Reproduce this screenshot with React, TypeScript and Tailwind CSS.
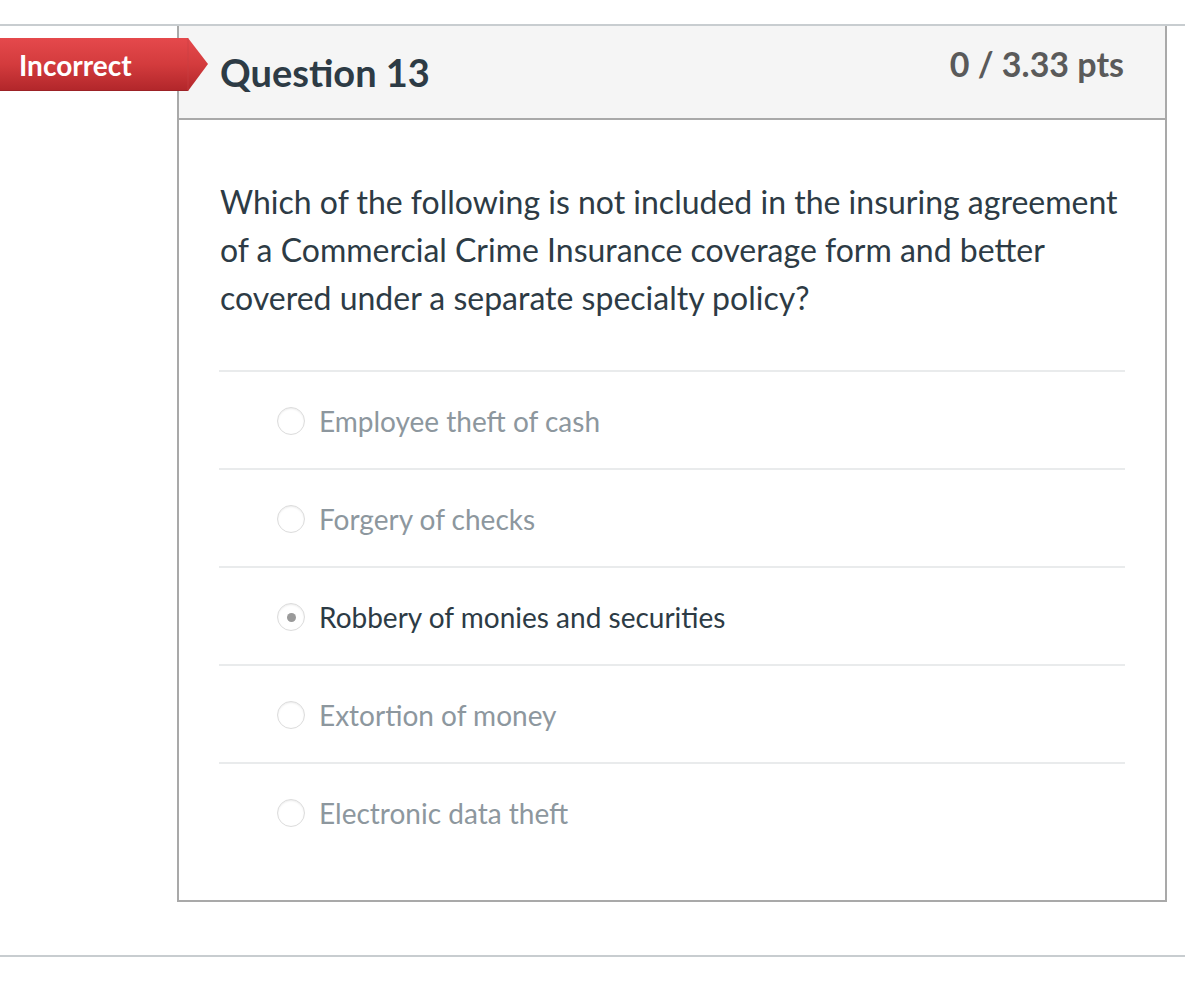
import React from 'react';

const answers = [
  { id: 1, text: 'Employee theft of cash', selected: false },
  { id: 2, text: 'Forgery of checks', selected: false },
  { id: 3, text: 'Robbery of monies and securities', selected: true },
  { id: 4, text: 'Extortion of money', selected: false },
  { id: 5, text: 'Electronic data theft', selected: false },
];

function IncorrectBanner() {
  return (
    <div className="absolute left-0 top-[38px] w-[210px] h-[54px]">
      <svg width="210" height="54" viewBox="0 0 210 54" className="absolute inset-0">
        <defs>
          <linearGradient id="bannerRed" x1="0" y1="0" x2="0" y2="1">
            <stop offset="0" stopColor="#e5494c" />
            <stop offset="0.5" stopColor="#d33b3d" />
            <stop offset="1" stopColor="#b1262a" />
          </linearGradient>
        </defs>
        <path d="M0 0 H188 L208 26 L188 53 H0 Z" fill="url(#bannerRed)" />
        <path d="M0 52.5 H188" stroke="#9c2226" strokeWidth="1" />
        <path d="M188 0 V53" stroke="#c84144" strokeWidth="1" opacity="0.6" />
      </svg>
      <span className="absolute left-[19px] top-[11px] text-[28px] leading-[32px] font-bold text-white">
        Incorrect
      </span>
    </div>
  );
}

function Radio({ selected }: { selected: boolean }) {
  return (
    <span className="flex items-center justify-center w-[28px] h-[28px] rounded-full border border-[#dcdcdc] bg-white shadow-[inset_0_1px_2px_rgba(0,0,0,0.08)] shrink-0">
      {selected && <span className="w-[9px] h-[9px] rounded-full bg-[#9a9a9a]" />}
    </span>
  );
}

export default function App() {
  return (
    <div className="relative w-full h-[1004px] bg-white font-['Lato','Liberation_Sans',sans-serif]">
      {/* page rule above the question */}
      <div className="h-[24px]" />
      <div className="h-[2px] bg-[#c8cdd0]" />

      <div className="ml-[177px] w-[990px] border-x-2 border-b-2 border-[#a9a9a9]">
        {/* header */}
        <div className="flex items-start justify-between h-[94px] bg-[#f5f5f5] border-b-2 border-[#a9a9a9] pl-[41px] pr-[41px]">
          <h2 className="mt-[24px] text-[38px] leading-[44px] font-bold text-[#2d3b45]">Question 13</h2>
          <div className="mt-[18px] text-[34px] leading-[40px] font-bold text-[#5a5a5a]">0 / 3.33 pts</div>
        </div>

        {/* body */}
        <div className="pt-[58px] pb-[40px] pl-[40px] pr-[40px]">
          <p className="text-[32px] leading-[48px] text-[#2d3b45] pl-[1px]">
            Which of the following is not included in the insuring agreement of a Commercial Crime Insurance coverage form and better covered under a separate specialty policy?
          </p>

          <div className="mt-[48px]">
            {answers.map((a) => (
              <div
                key={a.id}
                className="flex items-center gap-[14px] h-[98px] pt-[2px] pl-[58px] border-t-2 border-[#e9ebec]"
              >
                <Radio selected={a.selected} />
                <span className={`text-[28px] leading-[34px] ${a.selected ? 'text-[#2d3b45]' : 'text-[#8d979e]'}`}>
                  {a.text}
                </span>
              </div>
            ))}
          </div>
        </div>
      </div>

      <div className="h-[53px]" />
      <div className="h-[2px] bg-[#c8cdd0]" />

      <IncorrectBanner />
    </div>
  );
}
